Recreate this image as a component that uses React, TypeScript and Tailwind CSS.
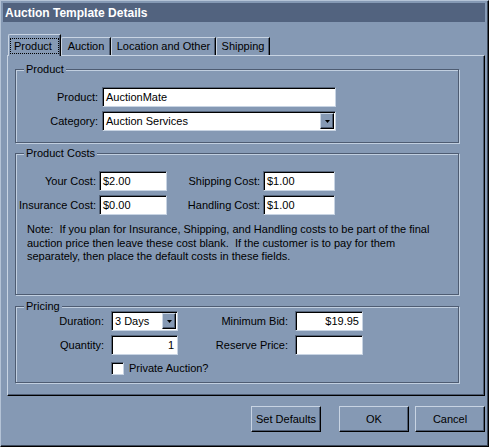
import React from 'react';

const sunken =
  'border border-t-[#56657b] border-l-[#56657b] border-b-[#c8d4e3] border-r-[#c8d4e3] shadow-[inset_1px_1px_0_#000] bg-white';
const raised =
  'border border-t-[#c8d4e3] border-l-[#c8d4e3] border-b-black border-r-black shadow-[inset_-1px_-1px_0_#4e5c72] bg-[#8599b4]';

function Field({ value, className = '', right = false }: { value?: string; className?: string; right?: boolean }) {
  return (
    <div
      className={`${sunken} h-[20px] flex items-center ${right ? 'justify-end pr-[3px]' : 'pl-[3px]'} leading-none ${className}`}
    >
      {value}
    </div>
  );
}

function Combo({ value, className = '' }: { value: string; className?: string }) {
  return (
    <div className={`${sunken} h-[20px] flex items-center justify-between pl-[3px] pr-[1px] py-[1px] ${className}`}>
      <span className="leading-none">{value}</span>
      <div className={`${raised} w-[14px] h-full flex items-center justify-center`}>
        <svg width="7" height="5" viewBox="0 0 7 5">
          <path d="M1 1h5L3.5 4z" fill="#000" />
        </svg>
      </div>
    </div>
  );
}

function Group({ title, className = '', children }: { title: string; className?: string; children: React.ReactNode }) {
  return (
    <div
      className={`relative border border-[#4e5c72] shadow-[inset_1px_1px_0_#c1cfe0,1px_1px_0_#c1cfe0] w-[444px] ${className}`}
    >
      <span className="absolute -top-[8px] left-[8px] px-[2px] bg-[#8599b4] leading-[14px]">{title}</span>
      {children}
    </div>
  );
}

function Tab({ label, active = false, className = '' }: { label: string; active?: boolean; className?: string }) {
  if (active) {
    return (
      <div
        className={`relative z-10 -mb-[1px] h-[22px] bg-[#8599b4] border-t border-l border-[#c8d4e3] border-r border-r-black shadow-[inset_-1px_0_0_#4e5c72] rounded-tl-[2px] flex items-start pt-[3px] px-[1px] ${className}`}
      >
        <span className="border border-dotted border-black px-[3px] h-[16px] leading-[14px] w-full">{label}</span>
      </div>
    );
  }
  return (
    <div
      className={`h-[18px] bg-[#8599b4] border-t border-l border-[#c8d4e3] border-r border-r-black shadow-[inset_-1px_0_0_#4e5c72] rounded-tl-[2px] flex items-center justify-center ${className}`}
    >
      <span className="leading-none">{label}</span>
    </div>
  );
}

function Button({ label, className = '' }: { label: string; className?: string }) {
  return (
    <div className={`${raised} w-[70px] h-[26px] flex items-center justify-center ${className}`}>
      <span className="leading-none">{label}</span>
    </div>
  );
}

export default function App() {
  return (
    <div className="w-[489px] h-[447px] bg-[#8599b4] border border-t-[#b4c3d6] border-l-[#b4c3d6] border-r-black border-b-black shadow-[inset_-1px_-1px_0_#3e4a5c] p-[2px] font-['Liberation_Sans',Arial,sans-serif] text-[11px] text-black flex flex-col">
      <div className="h-[19px] bg-[#52637f] pl-[2px] flex items-center mr-[1px]">
        <span className="text-white font-bold text-[12px] leading-none">Auction Template Details</span>
      </div>

      <div className="ml-[4px] mt-[12px] w-[478px] flex flex-col">
        <div className="flex items-end h-[21px] pl-[1px]">
          <Tab label="Product" active className="w-[53px]" />
          <Tab label="Auction" className="w-[50px]" />
          <Tab label="Location and Other" className="w-[105px]" />
          <Tab label="Shipping" className="w-[54px]" />
        </div>

        <div className="h-[341px] border border-t-[#c8d4e3] border-l-[#c8d4e3] border-r-black border-b-black shadow-[inset_-1px_-1px_0_#4e5c72] pl-[7px] pt-[13px] flex flex-col">
          <Group title="Product" className="h-[74px] pt-[17px] flex flex-col gap-[4px]">
            <div className="flex items-center">
              <span className="w-[82px] text-right">Product:</span>
              <Field value="AuctionMate" className="ml-[4px] w-[234px]" />
            </div>
            <div className="flex items-center">
              <span className="w-[82px] text-right">Category:</span>
              <Combo value="Auction Services" className="ml-[4px] w-[234px]" />
            </div>
          </Group>

          <Group title="Product Costs" className="mt-[10px] h-[142px] pt-[17px] flex flex-col">
            <div className="flex flex-col gap-[4px]">
              <div className="flex items-center">
                <span className="w-[80px] text-right">Your Cost:</span>
                <Field value="$2.00" className="ml-[3px] w-[68px]" />
                <span className="w-[93px] text-right">Shipping Cost:</span>
                <Field value="$1.00" className="ml-[3px] w-[72px]" />
              </div>
              <div className="flex items-center">
                <span className="w-[80px] text-right">Insurance Cost:</span>
                <Field value="$0.00" className="ml-[3px] w-[68px]" />
                <span className="w-[93px] text-right">Handling Cost:</span>
                <Field value="$1.00" className="ml-[3px] w-[72px]" />
              </div>
            </div>
            <p className="mt-[8px] pl-[11px] leading-[13.5px] whitespace-pre">
              {'Note:  If you plan for Insurance, Shipping, and Handling costs to be part of the final\nauction price then leave these cost blank.  If the customer is to pay for them\nseparately, then place the default costs in these fields.'}
            </p>
          </Group>

          <Group title="Pricing" className="mt-[11px] h-[77px] pt-[4px] flex flex-col">
            <div className="flex flex-col gap-[4px]">
              <div className="flex items-center">
                <span className="w-[88px] text-right">Duration:</span>
                <Combo value="3 Days" className="ml-[7px] w-[67px]" />
                <span className="w-[110px] text-right">Minimum Bid:</span>
                <Field value="$19.95" right className="ml-[7px] w-[68px]" />
              </div>
              <div className="flex items-center">
                <span className="w-[88px] text-right">Quantity:</span>
                <Field value="1" right className="ml-[7px] w-[67px]" />
                <span className="w-[110px] text-right">Reserve Price:</span>
                <Field className="ml-[7px] w-[68px]" />
              </div>
            </div>
            <div className="mt-[7px] pl-[95px] flex items-center">
              <div className={`${sunken} w-[13px] h-[13px]`} />
              <span className="ml-[5px] leading-none">Private Auction?</span>
            </div>
          </Group>
        </div>
      </div>

      <div className="mt-[10px] flex justify-end pr-[1px]">
        <Button label="Set Defaults" />
        <Button label="OK" className="ml-[18px]" />
        <Button label="Cancel" className="ml-[6px]" />
      </div>
    </div>
  );
}
